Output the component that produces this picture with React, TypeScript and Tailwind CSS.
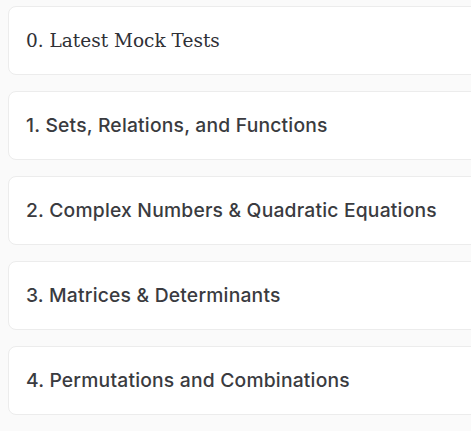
import React from "react";

const chapters = [
  "1. Sets, Relations, and Functions",
  "2. Complex Numbers & Quadratic Equations",
  "3. Matrices & Determinants",
  "4. Permutations and Combinations",
];

export default function App() {
  return (
    <div className="min-h-screen w-[471px] overflow-hidden bg-[#fafafa] pl-2 pt-[6px]">
      <div className="flex w-[480px] flex-col gap-4">
        <div className="flex h-[69px] items-center rounded-lg border border-[#ececec] bg-white px-[17px]">
          <span className="text-[18.5px] font-normal text-[#2f3036] [font-family:'DejaVu_Serif',serif]">
            0. Latest Mock Tests
          </span>
        </div>
        {chapters.map((c) => (
          <div
            key={c}
            className="flex h-[69px] items-center rounded-lg border border-[#ececec] bg-white px-[17px]"
          >
            <span className="text-[19.3px] font-medium tracking-[0.2px] text-[#3a3b40] [font-family:Inter,sans-serif]">
              {c}
            </span>
          </div>
        ))}
      </div>
    </div>
  );
}
